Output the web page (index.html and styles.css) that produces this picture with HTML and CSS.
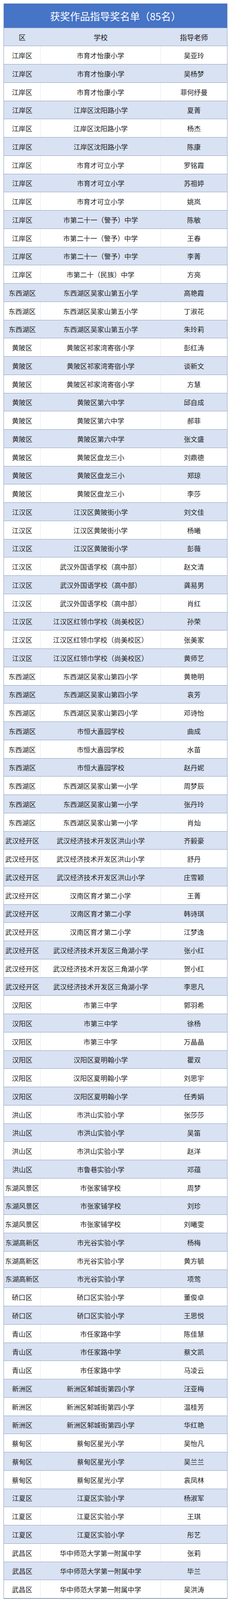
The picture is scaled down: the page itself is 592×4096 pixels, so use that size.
FILE: index.html
```html
<!DOCTYPE html>
<html lang="zh-CN">
<head>
<meta charset="utf-8">
<title>获奖作品指导奖名单</title>
<link rel="stylesheet" href="styles.css">
</head>
<body>
<div class="sheet">
  <div class="title">获奖作品指导奖名单（85名）</div>
  <div class="row head"><div class="c">区</div><div class="c">学校</div><div class="c">指导老师</div></div>
  <div class="row d"><div class="c">江岸区</div><div class="c">市育才怡康小学</div><div class="c">吴亚玲</div></div>
  <div class="row d"><div class="c">江岸区</div><div class="c">市育才怡康小学</div><div class="c">吴杨梦</div></div>
  <div class="row d"><div class="c">江岸区</div><div class="c">市育才怡康小学</div><div class="c">菲何纾曼</div></div>
  <div class="row d"><div class="c">江岸区</div><div class="c">江岸区沈阳路小学</div><div class="c">夏菁</div></div>
  <div class="row d"><div class="c">江岸区</div><div class="c">江岸区沈阳路小学</div><div class="c">杨杰</div></div>
  <div class="row d"><div class="c">江岸区</div><div class="c">江岸区沈阳路小学</div><div class="c">陈康</div></div>
  <div class="row d"><div class="c">江岸区</div><div class="c">市育才可立小学</div><div class="c">罗铭霞</div></div>
  <div class="row d"><div class="c">江岸区</div><div class="c">市育才可立小学</div><div class="c">苏祖婷</div></div>
  <div class="row d"><div class="c">江岸区</div><div class="c">市育才可立小学</div><div class="c">姚岚</div></div>
  <div class="row d"><div class="c">江岸区</div><div class="c">市第二十一（警予）中学</div><div class="c">陈敏</div></div>
  <div class="row d"><div class="c">江岸区</div><div class="c">市第二十一（警予）中学</div><div class="c">王春</div></div>
  <div class="row d"><div class="c">江岸区</div><div class="c">市第二十一（警予）中学</div><div class="c">李菁</div></div>
  <div class="row d"><div class="c">江岸区</div><div class="c">市第二十（民族）中学</div><div class="c">方亮</div></div>
  <div class="row d"><div class="c">东西湖区</div><div class="c">东西湖区吴家山第五小学</div><div class="c">高艳霞</div></div>
  <div class="row d"><div class="c">东西湖区</div><div class="c">东西湖区吴家山第五小学</div><div class="c">丁淑花</div></div>
  <div class="row d"><div class="c">东西湖区</div><div class="c">东西湖区吴家山第五小学</div><div class="c">朱玲莉</div></div>
  <div class="row d"><div class="c">黄陂区</div><div class="c">黄陂区祁家湾寄宿小学</div><div class="c">彭红涛</div></div>
  <div class="row d"><div class="c">黄陂区</div><div class="c">黄陂区祁家湾寄宿小学</div><div class="c">谈新文</div></div>
  <div class="row d"><div class="c">黄陂区</div><div class="c">黄陂区祁家湾寄宿小学</div><div class="c">方慧</div></div>
  <div class="row d"><div class="c">黄陂区</div><div class="c">黄陂区第六中学</div><div class="c">邱自成</div></div>
  <div class="row d"><div class="c">黄陂区</div><div class="c">黄陂区第六中学</div><div class="c">郝菲</div></div>
  <div class="row d"><div class="c">黄陂区</div><div class="c">黄陂区第六中学</div><div class="c">张文盛</div></div>
  <div class="row d"><div class="c">黄陂区</div><div class="c">黄陂区盘龙三小</div><div class="c">刘鼎德</div></div>
  <div class="row d"><div class="c">黄陂区</div><div class="c">黄陂区盘龙三小</div><div class="c">郑琼</div></div>
  <div class="row d"><div class="c">黄陂区</div><div class="c">黄陂区盘龙三小</div><div class="c">李莎</div></div>
  <div class="row d"><div class="c">江汉区</div><div class="c">江汉区黄陂街小学</div><div class="c">刘文佳</div></div>
  <div class="row d"><div class="c">江汉区</div><div class="c">江汉区黄陂街小学</div><div class="c">杨曦</div></div>
  <div class="row d"><div class="c">江汉区</div><div class="c">江汉区黄陂街小学</div><div class="c">彭薇</div></div>
  <div class="row d"><div class="c">江汉区</div><div class="c">武汉外国语学校（高中部）</div><div class="c">赵文清</div></div>
  <div class="row d"><div class="c">江汉区</div><div class="c">武汉外国语学校（高中部）</div><div class="c">龚易男</div></div>
  <div class="row d"><div class="c">江汉区</div><div class="c">武汉外国语学校（高中部）</div><div class="c">肖红</div></div>
  <div class="row d"><div class="c">江汉区</div><div class="c">江汉区红领巾学校（尚美校区）</div><div class="c">孙荣</div></div>
  <div class="row d"><div class="c">江汉区</div><div class="c">江汉区红领巾学校（尚美校区）</div><div class="c">张美家</div></div>
  <div class="row d"><div class="c">江汉区</div><div class="c">江汉区红领巾学校（尚美校区）</div><div class="c">黄师艺</div></div>
  <div class="row d"><div class="c">东西湖区</div><div class="c">东西湖区吴家山第四小学</div><div class="c">黄艳明</div></div>
  <div class="row d"><div class="c">东西湖区</div><div class="c">东西湖区吴家山第四小学</div><div class="c">袁芳</div></div>
  <div class="row d"><div class="c">东西湖区</div><div class="c">东西湖区吴家山第四小学</div><div class="c">邓诗怡</div></div>
  <div class="row d"><div class="c">东西湖区</div><div class="c">市恒大嘉园学校</div><div class="c">曲成</div></div>
  <div class="row d"><div class="c">东西湖区</div><div class="c">市恒大嘉园学校</div><div class="c">水苗</div></div>
  <div class="row d"><div class="c">东西湖区</div><div class="c">市恒大嘉园学校</div><div class="c">赵丹妮</div></div>
  <div class="row d"><div class="c">东西湖区</div><div class="c">东西湖区吴家山第一小学</div><div class="c">周梦辰</div></div>
  <div class="row d"><div class="c">东西湖区</div><div class="c">东西湖区吴家山第一小学</div><div class="c">张丹玲</div></div>
  <div class="row d"><div class="c">东西湖区</div><div class="c">东西湖区吴家山第一小学</div><div class="c">肖灿</div></div>
  <div class="row d"><div class="c">武汉经开区</div><div class="c">武汉经济技术开发区洪山小学</div><div class="c">齐毅豪</div></div>
  <div class="row d"><div class="c">武汉经开区</div><div class="c">武汉经济技术开发区洪山小学</div><div class="c">舒丹</div></div>
  <div class="row d"><div class="c">武汉经开区</div><div class="c">武汉经济技术开发区洪山小学</div><div class="c">庄雪颖</div></div>
  <div class="row d"><div class="c">武汉经开区</div><div class="c">汉南区育才第二小学</div><div class="c">王菁</div></div>
  <div class="row d"><div class="c">武汉经开区</div><div class="c">汉南区育才第二小学</div><div class="c">韩诗琪</div></div>
  <div class="row d"><div class="c">武汉经开区</div><div class="c">汉南区育才第二小学</div><div class="c">江梦逸</div></div>
  <div class="row d"><div class="c">武汉经开区</div><div class="c">武汉经济技术开发区三角湖小学</div><div class="c">张小红</div></div>
  <div class="row d"><div class="c">武汉经开区</div><div class="c">武汉经济技术开发区三角湖小学</div><div class="c">贺小红</div></div>
  <div class="row d"><div class="c">武汉经开区</div><div class="c">武汉经济技术开发区三角湖小学</div><div class="c">李思凡</div></div>
  <div class="row d"><div class="c">汉阳区</div><div class="c">市第三中学</div><div class="c">郭羽希</div></div>
  <div class="row d"><div class="c">汉阳区</div><div class="c">市第三中学</div><div class="c">徐杨</div></div>
  <div class="row d"><div class="c">汉阳区</div><div class="c">市第三中学</div><div class="c">万晶晶</div></div>
  <div class="row d"><div class="c">汉阳区</div><div class="c">汉阳区夏明翰小学</div><div class="c">瞿双</div></div>
  <div class="row d"><div class="c">汉阳区</div><div class="c">汉阳区夏明翰小学</div><div class="c">刘思宇</div></div>
  <div class="row d"><div class="c">汉阳区</div><div class="c">汉阳区夏明翰小学</div><div class="c">任秀娟</div></div>
  <div class="row d"><div class="c">洪山区</div><div class="c">市洪山实验小学</div><div class="c">张莎莎</div></div>
  <div class="row d"><div class="c">洪山区</div><div class="c">市洪山实验小学</div><div class="c">吴笛</div></div>
  <div class="row d"><div class="c">洪山区</div><div class="c">市洪山实验小学</div><div class="c">赵洋</div></div>
  <div class="row d"><div class="c">洪山区</div><div class="c">市鲁巷实验小学</div><div class="c">邓蕴</div></div>
  <div class="row d"><div class="c">东湖风景区</div><div class="c">市张家铺学校</div><div class="c">周梦</div></div>
  <div class="row d"><div class="c">东湖风景区</div><div class="c">市张家铺学校</div><div class="c">刘珍</div></div>
  <div class="row d"><div class="c">东湖风景区</div><div class="c">市张家铺学校</div><div class="c">刘曦雯</div></div>
  <div class="row d"><div class="c">东湖高新区</div><div class="c">市光谷实验小学</div><div class="c">杨梅</div></div>
  <div class="row d"><div class="c">东湖高新区</div><div class="c">市光谷实验小学</div><div class="c">黄方毓</div></div>
  <div class="row d"><div class="c">东湖高新区</div><div class="c">市光谷实验小学</div><div class="c">项莺</div></div>
  <div class="row d"><div class="c">硚口区</div><div class="c">硚口区实验小学</div><div class="c">董俊卓</div></div>
  <div class="row d"><div class="c">硚口区</div><div class="c">硚口区实验小学</div><div class="c">王思悦</div></div>
  <div class="row d"><div class="c">青山区</div><div class="c">市任家路中学</div><div class="c">陈佳慧</div></div>
  <div class="row d"><div class="c">青山区</div><div class="c">市任家路中学</div><div class="c">蔡文凯</div></div>
  <div class="row d"><div class="c">青山区</div><div class="c">市任家路中学</div><div class="c">马凌云</div></div>
  <div class="row d"><div class="c">新洲区</div><div class="c">新洲区邾城街第四小学</div><div class="c">汪亚梅</div></div>
  <div class="row d"><div class="c">新洲区</div><div class="c">新洲区邾城街第四小学</div><div class="c">温桂芳</div></div>
  <div class="row d"><div class="c">新洲区</div><div class="c">新洲区邾城街第四小学</div><div class="c">华红艳</div></div>
  <div class="row d"><div class="c">蔡甸区</div><div class="c">蔡甸区星光小学</div><div class="c">吴怡凡</div></div>
  <div class="row d"><div class="c">蔡甸区</div><div class="c">蔡甸区星光小学</div><div class="c">吴兰兰</div></div>
  <div class="row d"><div class="c">蔡甸区</div><div class="c">蔡甸区星光小学</div><div class="c">袁凤林</div></div>
  <div class="row d"><div class="c">江夏区</div><div class="c">江夏区实验小学</div><div class="c">杨淑军</div></div>
  <div class="row d"><div class="c">江夏区</div><div class="c">江夏区实验小学</div><div class="c">王琪</div></div>
  <div class="row d"><div class="c">江夏区</div><div class="c">江夏区实验小学</div><div class="c">彤艺</div></div>
  <div class="row d"><div class="c">武昌区</div><div class="c">华中师范大学第一附属中学</div><div class="c">张莉</div></div>
  <div class="row d"><div class="c">武昌区</div><div class="c">华中师范大学第一附属中学</div><div class="c">毕兰</div></div>
  <div class="row d"><div class="c">武昌区</div><div class="c">华中师范大学第一附属中学</div><div class="c">吴洪涛</div></div>
</div>
</body>
</html>
```

FILE: styles.css
```css
html, body {
  margin: 0;
  padding: 0;
  background: #ffffff;
}

body {
  padding: 8.75px 0 0 9px;
  font-family: "Noto Sans CJK SC", "Noto Sans", sans-serif;
  color: #222222;
}

.sheet {
  width: 574px;
  box-sizing: border-box;
  border-left: 1px solid #8c9cb8;
  border-right: 1px solid #8c9cb8;
  border-bottom: 1.5px solid #8596b3;
}

.title {
  height: 63px;
  box-sizing: border-box;
  display: flex;
  align-items: center;
  justify-content: center;
  background: #4674c6;
  color: #ffffff;
  font-size: 25.6px;
  line-height: 1;
  letter-spacing: 0;
  border-bottom: 1.5px solid #8fa2c2;
  padding-top: 2px;
}

.row {
  display: grid;
  grid-template-columns: 94px 308px 1fr;
  height: 46.75px;
  box-sizing: border-box;
  border-bottom: 1.2px solid #8c9eba;
  background: #ffffff;
}

.row.head {
  height: 46.6px;
  background: #d9e2f3;
}

.row.d:nth-child(even) {
  background: #d9e2f3;
}

.c {
  display: flex;
  align-items: center;
  justify-content: center;
  white-space: nowrap;
  font-size: 17.4px;
  line-height: 1;
  padding-top: 1px;
}

.head .c {
  font-size: 18px;
  color: #1a1a1a;
}

.row.d:nth-child(odd) .c:not(:last-child) {
  border-right: 1px solid #e6e8ec;
}
```
